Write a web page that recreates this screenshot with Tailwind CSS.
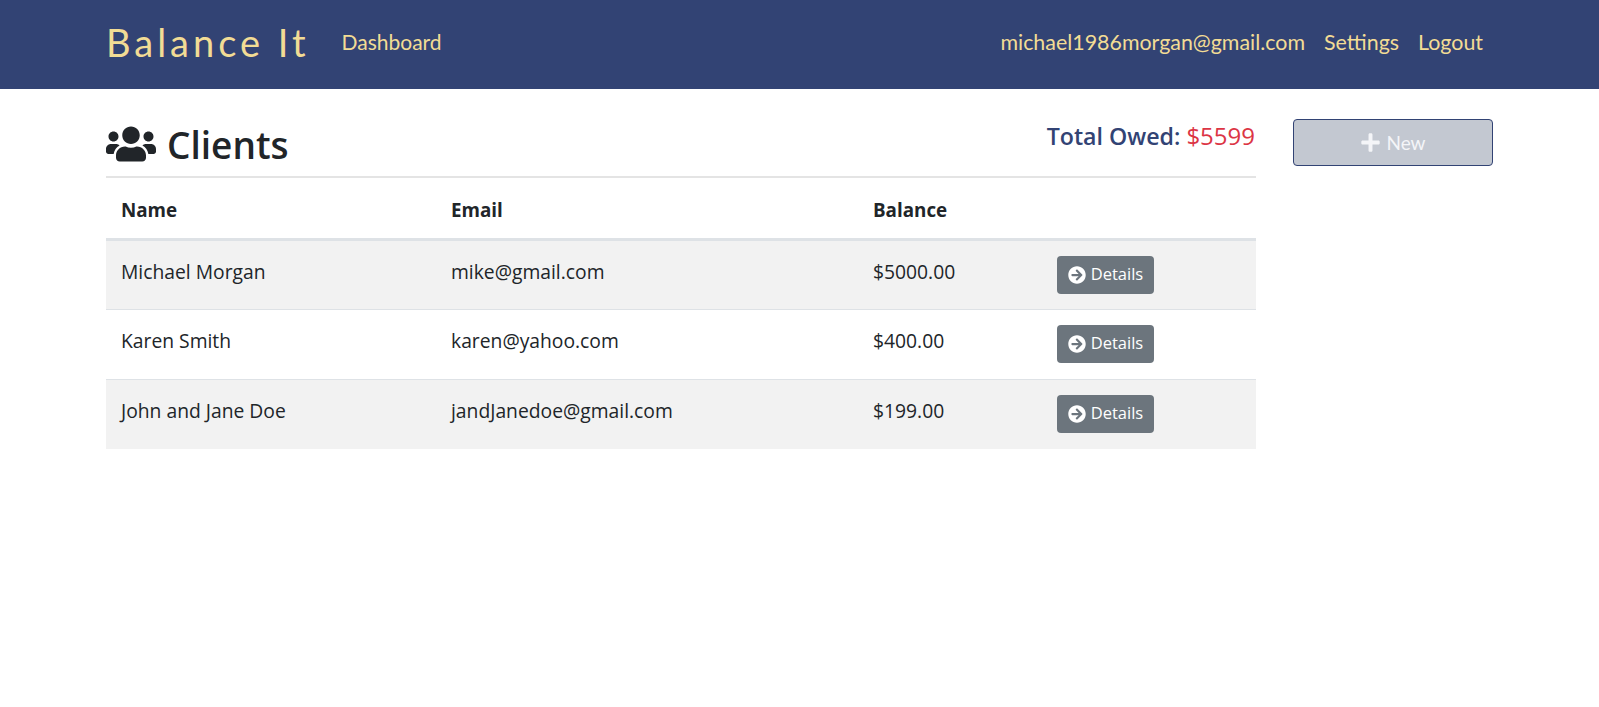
<!DOCTYPE html>
<html lang="en">

<head>
    <meta charset="UTF-8" />
    <meta name="viewport" content="width=device-width, initial-scale=1.0" />
    <title>Balance It</title>
    <script src="https://cdn.jsdelivr.net/npm/@tailwindcss/browser@4"></script>
</head>

<body class="bg-white text-[#212529] font-['Open_Sans',sans-serif] text-[19.3px]">

    <!-- Navbar -->
    <nav class="h-[89px] pb-[5px] bg-[#324374] text-[#f2dc95] flex items-center pl-[106px] pr-[107px] font-['Lato',sans-serif] text-[21.4px]">
        <a href="#" class="text-[38px] tracking-[4px] mr-[32px]">Balance It</a>
        <a href="#" class="text-[21px]">Dashboard</a>
        <div class="ml-auto flex gap-[19px] pr-[9px]">
            <a href="#">michael1986morgan@gmail.com</a>
            <a href="#">Settings</a>
            <a href="#">Logout</a>
        </div>
    </nav>

    <main class="flex pl-[106px] pr-[106px] pt-[30px] gap-[37px]">
        <div class="w-[1150px]">
            <!-- Heading -->
            <div class="flex justify-between h-[59px] border-b-2 border-[#e4e4e4]">
                <h1 class="flex items-center gap-[11px] text-[37px] font-semibold leading-none h-[50px]">
                    <svg class="w-[50px] h-[40px] fill-[#212529]" viewBox="0 0 640 512"><path d="M96 224c35.3 0 64-28.7 64-64s-28.7-64-64-64-64 28.7-64 64 28.7 64 64 64zm448 0c35.3 0 64-28.7 64-64s-28.7-64-64-64-64 28.7-64 64 28.7 64 64 64zm32 32h-64c-17.6 0-33.5 7.1-45.1 18.6 40.3 22.1 68.9 62 75.1 109.4h66c17.7 0 32-14.3 32-32v-32c0-35.3-28.7-64-64-64zm-256 0c61.9 0 112-50.1 112-112S381.9 32 320 32 208 82.1 208 144s50.1 112 112 112zm76.8 32h-8.3c-20.8 10-43.9 16-68.5 16s-47.6-6-68.5-16h-8.3C179.6 288 128 339.6 128 403.2V432c0 26.5 21.5 48 48 48h288c26.5 0 48-21.5 48-48v-28.8c0-63.6-51.6-115.2-115.2-115.2zm-223.7-13.4C161.5 263.1 145.6 256 128 256H64c-35.3 0-64 28.7-64 64v32c0 17.7 14.3 32 32 32h65.9c6.3-47.4 34.9-87.3 75.2-109.4z"/></svg>
                    Clients
                </h1>
                <div class="text-[23.2px] font-semibold text-[#324374] leading-[34px] pr-[1px]">Total Owed: <span class="text-[#dc3545] font-medium text-[24px]">$5599</span></div>
            </div>

            <!-- Clients table -->
            <table class="w-[1150px] table-fixed">
                <thead>
                    <tr class="h-[61px] text-left font-bold text-[18.8px]">
                        <th class="w-[330px] pl-[15px] pt-[4px] border-b-[3px] border-[#dee2e6]">Name</th>
                        <th class="w-[422px] pl-[15px] pt-[4px] border-b-[3px] border-[#dee2e6]">Email</th>
                        <th class="w-[184px] pl-[15px] pt-[4px] border-b-[3px] border-[#dee2e6]">Balance</th>
                        <th class="border-b-[3px] border-[#dee2e6]"></th>
                    </tr>
                </thead>
                <tbody>
                    <tr class="bg-[#f2f2f2]">
                        <td class="h-[70px] align-top pl-[15px] pt-[17px] border-b border-[#dee2e6]">Michael Morgan</td>
                        <td class="align-top pl-[15px] pt-[17px] border-b border-[#dee2e6]">mike@gmail.com</td>
                        <td class="align-top pl-[15px] pt-[17px] border-b border-[#dee2e6]">$5000.00</td>
                        <td class="align-top pl-[15px] pt-[15px] border-b border-[#dee2e6]">
                            <a href="#" class="w-[97px] h-[38px] rounded bg-[#6c757d] text-white flex items-center justify-center gap-[5px] text-[16.5px]">
                                <svg class="w-[18px] h-[18px] fill-white" viewBox="0 0 512 512"><path d="M256 8c137 0 248 111 248 248S393 504 256 504 8 393 8 256 119 8 256 8zm-28.9 143.6l75.5 72.4H120c-13.3 0-24 10.7-24 24v16c0 13.3 10.7 24 24 24h182.6l-75.5 72.4c-9.7 9.3-9.9 24.8-.4 34.3l11 10.9c9.4 9.4 24.6 9.4 33.9 0L404.3 273c9.4-9.4 9.4-24.6 0-33.9L271.6 106.3c-9.4-9.4-24.6-9.4-33.9 0l-11 10.9c-9.5 9.6-9.3 25.1.4 34.4z"/></svg>
                                Details
                            </a>
                        </td>
                    </tr>
                    <tr>
                        <td class="h-[70px] align-top pl-[15px] pt-[17px] border-b border-[#dee2e6]">Karen Smith</td>
                        <td class="align-top pl-[15px] pt-[17px] border-b border-[#dee2e6]">karen@yahoo.com</td>
                        <td class="align-top pl-[15px] pt-[17px] border-b border-[#dee2e6]">$400.00</td>
                        <td class="align-top pl-[15px] pt-[15px] border-b border-[#dee2e6]">
                            <a href="#" class="w-[97px] h-[38px] rounded bg-[#6c757d] text-white flex items-center justify-center gap-[5px] text-[16.5px]">
                                <svg class="w-[18px] h-[18px] fill-white" viewBox="0 0 512 512"><path d="M256 8c137 0 248 111 248 248S393 504 256 504 8 393 8 256 119 8 256 8zm-28.9 143.6l75.5 72.4H120c-13.3 0-24 10.7-24 24v16c0 13.3 10.7 24 24 24h182.6l-75.5 72.4c-9.7 9.3-9.9 24.8-.4 34.3l11 10.9c9.4 9.4 24.6 9.4 33.9 0L404.3 273c9.4-9.4 9.4-24.6 0-33.9L271.6 106.3c-9.4-9.4-24.6-9.4-33.9 0l-11 10.9c-9.5 9.6-9.3 25.1.4 34.4z"/></svg>
                                Details
                            </a>
                        </td>
                    </tr>
                    <tr class="bg-[#f2f2f2]">
                        <td class="h-[70px] align-top pl-[15px] pt-[17px]">John and Jane Doe</td>
                        <td class="align-top pl-[15px] pt-[17px]">jandJanedoe@gmail.com</td>
                        <td class="align-top pl-[15px] pt-[17px]">$199.00</td>
                        <td class="align-top pl-[15px] pt-[15px]">
                            <a href="#" class="w-[97px] h-[38px] rounded bg-[#6c757d] text-white flex items-center justify-center gap-[5px] text-[16.5px]">
                                <svg class="w-[18px] h-[18px] fill-white" viewBox="0 0 512 512"><path d="M256 8c137 0 248 111 248 248S393 504 256 504 8 393 8 256 119 8 256 8zm-28.9 143.6l75.5 72.4H120c-13.3 0-24 10.7-24 24v16c0 13.3 10.7 24 24 24h182.6l-75.5 72.4c-9.7 9.3-9.9 24.8-.4 34.3l11 10.9c9.4 9.4 24.6 9.4 33.9 0L404.3 273c9.4-9.4 9.4-24.6 0-33.9L271.6 106.3c-9.4-9.4-24.6-9.4-33.9 0l-11 10.9c-9.5 9.6-9.3 25.1.4 34.4z"/></svg>
                                Details
                            </a>
                        </td>
                    </tr>
                </tbody>
            </table>
        </div>

        <!-- New client -->
        <div class="w-[200px]">
            <button class="w-full h-[47px] rounded border border-[#324374] bg-[#c3c8d1] text-[#f4f5f8] flex items-center justify-center gap-[5px] text-[19px] font-['Lato',sans-serif]">
                <svg class="w-[21px] h-[21px] fill-[#f4f5f8]" viewBox="0 0 448 512"><path d="M416 208H272V64c0-17.67-14.33-32-32-32h-32c-17.67 0-32 14.33-32 32v144H32c-17.67 0-32 14.33-32 32v32c0 17.67 14.33 32 32 32h144v144c0 17.67 14.33 32 32 32h32c17.67 0 32-14.33 32-32V304h144c17.67 0 32-14.33 32-32v-32c0-17.67-14.33-32-32-32z"/></svg>
                <span class="pt-[2px]">New</span>
            </button>
        </div>
    </main>
</body>

</html>
